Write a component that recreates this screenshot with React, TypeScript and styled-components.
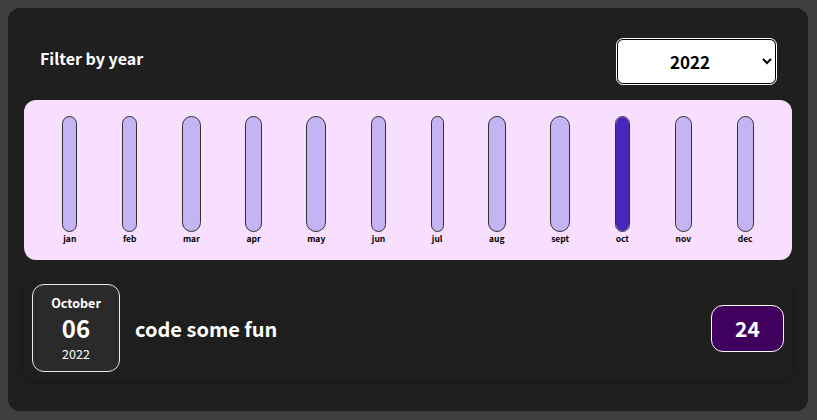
import styled, { createGlobalStyle } from "styled-components"

const GlobalStyle = createGlobalStyle`
  * {
    box-sizing: border-box;
  }
  html {
    font-family: "Noto Sans CJK JP", "Noto Sans", sans-serif;
  }
  body {
    margin: 8px;
    background-color: #3f3f3f;
  }
`

const Expenses = styled.div`
  padding: 1rem;
  background-color: rgb(31, 31, 31);
  width: 800px;
  height: 403px;
  border-radius: 12px;
`

const FilterControl = styled.div`
  display: flex;
  width: 100%;
  align-items: center;
  justify-content: space-between;
  margin: 15px 0 16px;
  padding: 0 1rem;
  color: white;
`

const FilterLabel = styled.label`
  font-weight: bold;
  font-size: 16px;
  margin-bottom: 0.5rem;
`

const YearSelect = styled.select`
  font: inherit;
  font-size: 17px;
  font-weight: bold;
  width: 159px;
  height: 45px;
  padding: 0.5rem 0 0.5rem 3rem;
  border-radius: 6px;
  border: 1px solid #000;
  outline: 1px solid #fff;
  background: #fff;
  color: #000;
`

const Chart = styled.div`
  padding: 1rem;
  border-radius: 12px;
  background-color: #f8dfff;
  display: flex;
  justify-content: space-around;
  height: 10rem;
`

const ChartBar = styled.div`
  height: 100%;
  display: flex;
  flex-direction: column;
  align-items: center;
`

const BarInner = styled.div`
  flex: 1;
  width: 100%;
  border: 1px solid #313131;
  border-radius: 12px;
  background-color: #c3b4f3;
  overflow: hidden;
  display: flex;
  flex-direction: column;
  justify-content: flex-end;
`

const BarFill = styled.div`
  background-color: #4826b9;
  width: 100%;
`

const BarLabel = styled.div`
  font-weight: bold;
  font-size: 8.5px;
  line-height: 12px;
  color: #000;
  text-align: center;
  padding: 0 1px;
`

const ExpenseItem = styled.div`
  display: flex;
  align-items: center;
  gap: 15px;
  box-shadow: 0 2px 8px rgba(0, 0, 0, 0.25);
  padding: 0.5rem;
  margin: 1rem 0;
  border-radius: 12px;
  background-color: #1e1e1e;
`

const DateBox = styled.div`
  display: flex;
  flex-direction: column;
  width: 88px;
  height: 88px;
  border: 1px solid #ececec;
  background-color: #2a2a2a;
  color: white;
  border-radius: 12px;
  align-items: center;
  justify-content: center;
`

const Month = styled.div`
  font-size: 12.5px;
  font-weight: bold;
`

const Day = styled.div`
  font-size: 24px;
  font-weight: bold;
  line-height: 1.35;
`

const Year = styled.div`
  font-size: 12.5px;
`

const Title = styled.h2`
  flex: 1;
  margin: 0;
  font-size: 20px;
  color: white;
`

const Price = styled.div`
  font-size: 21px;
  font-weight: bold;
  color: white;
  background-color: #40005d;
  border: 1px solid white;
  width: 73px;
  height: 47px;
  display: flex;
  align-items: center;
  justify-content: center;
  border-radius: 12px;
`

const months = [
  ["jan", 0],
  ["feb", 0],
  ["mar", 0],
  ["apr", 0],
  ["may", 0],
  ["jun", 0],
  ["jul", 0],
  ["aug", 0],
  ["sept", 0],
  ["oct", 100],
  ["nov", 0],
  ["dec", 0],
] as const

export default function App() {
  return (
    <>
      <GlobalStyle />
      <Expenses>
        <FilterControl>
          <FilterLabel>Filter by year</FilterLabel>
          <YearSelect defaultValue="2022">
            <option value="2023">2023</option>
            <option value="2022">2022</option>
            <option value="2021">2021</option>
            <option value="2020">2020</option>
          </YearSelect>
        </FilterControl>
        <Chart>
          {months.map(([label, fill]) => (
            <ChartBar key={label}>
              <BarInner>
                <BarFill style={{ height: `${fill}%` }} />
              </BarInner>
              <BarLabel>{label}</BarLabel>
            </ChartBar>
          ))}
        </Chart>
        <ExpenseItem>
          <DateBox>
            <Month>October</Month>
            <Day>06</Day>
            <Year>2022</Year>
          </DateBox>
          <Title>code some fun</Title>
          <Price>24</Price>
        </ExpenseItem>
      </Expenses>
    </>
  )
}
